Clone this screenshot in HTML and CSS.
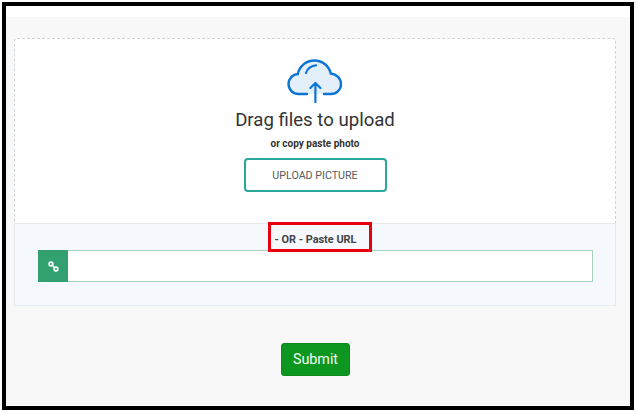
FILE: index.html
```html
<!DOCTYPE html>
<html lang="en">
<head>
<meta charset="utf-8">
<title>Upload picture</title>
<link rel="stylesheet" href="styles.css">
</head>
<body>
<div class="frame">
  <div class="page">
    <div class="card">
      <div class="drop">
        <svg class="cloud" width="56" height="44" viewBox="0 0 56 44" fill="none">
          <path d="M14 35H11.5C6 35 1.5 30.6 1.5 25C1.5 19.6 5.6 15.4 10.8 15C12.3 7.4 19 1.5 27.4 1.5C35.5 1.5 42.2 7.2 43.8 14.6C49.6 15 54 19.6 54 25.2C54 30.6 49.6 35 44 35H14Z" fill="#e3f0fb"/>
          <path d="M20 35H11.5C6 35 1.5 30.6 1.5 25C1.5 19.6 5.6 15.4 10.8 15C12.3 7.4 19 1.5 27.4 1.5C35.5 1.5 42.2 7.2 43.8 14.6C49.6 15 54 19.6 54 25.2C54 30.6 49.6 35 44 35H37" stroke="#0b74d4" stroke-width="2.4" stroke-linecap="round"/>
          <path d="M19 14C20 9.8 24.6 6.6 29 6.4" stroke="#0b74d4" stroke-width="2.2" stroke-linecap="round"/>
          <path d="M28.4 43V24M23.4 29L28.4 24L33.4 29" stroke="#0b74d4" stroke-width="2.2" stroke-linecap="round" stroke-linejoin="round"/>
        </svg>
        <h1 class="title">Drag files to upload</h1>
        <p class="hint">or copy paste photo</p>
        <button class="upload" type="button">UPLOAD PICTURE</button>
      </div>
      <div class="url-panel">
        <div class="or">- OR - Paste URL</div>
        <div class="url-group">
          <span class="addon">
            <svg width="11" height="11" viewBox="0 0 11 11" fill="none" stroke="#fff" stroke-width="1.6">
              <circle cx="3" cy="3" r="1.9"/>
              <circle cx="8" cy="8" r="1.9"/>
              <path d="M4.5 4.5L6.5 6.5"/>
            </svg>
          </span>
          <input class="url-input" type="text">
        </div>
      </div>
    </div>
    <div class="actions">
      <button class="submit" type="button">Submit</button>
    </div>
  </div>
  <div class="highlight"></div>
</div>
</body>
</html>
```

FILE: styles.css
```css
* { box-sizing: border-box; }
html, body { margin: 0; padding: 0; background: #fff; }
body { width: 636px; height: 412px; overflow: hidden; font-family: Roboto, sans-serif; }
.frame {
  position: relative;
  width: 632px;
  height: 408px;
  margin: 2px 0 0 2px;
  border: 4px solid #000;
  background: #fff;
}
.page {
  margin-top: 11px;
  height: 388px;
  background: #f8f8f8;
  padding: 21px 14px 0 8px;
}
.card { width: 602px; }
.drop {
  height: 185px;
  background: #fff;
  border: 1px dashed #ccd4dc;
  border-bottom: 0;
  border-radius: 3px 3px 0 0;
  display: flex;
  flex-direction: column;
  align-items: center;
  padding-top: 20px;
}
.cloud { display: block; }
.title {
  margin: 6px 0 0;
  font-size: 18.6px;
  line-height: 22px;
  font-weight: 400;
  color: #333;
}
.hint {
  margin: 6px 0 0;
  font-size: 10px;
  line-height: 14px;
  font-weight: 700;
  color: #333;
}
.upload {
  width: 143px;
  height: 34px;
  margin-top: 7px;
  background: #fff;
  border: 2px solid #2aa79b;
  border-radius: 4px;
  color: #5a5a5a;
  font: 400 10.7px Roboto, sans-serif;
}
.url-panel {
  height: 83px;
  background: #f5f8fc;
  border: 1px solid #e6e9ee;
  padding: 9px 22px 0 23px;
}
.or {
  text-align: center;
  font-size: 10.9px;
  line-height: 14px;
  font-weight: 700;
  color: #444;
}
.url-group { display: flex; height: 32px; margin-top: 3px; }
.addon {
  width: 30px;
  background: #33a06f;
  display: flex;
  align-items: center;
  justify-content: center;
}
.url-input {
  flex: 1;
  min-width: 0;
  background: #fff;
  border: 1px solid #a4d0bc;
  border-left: 0;
  outline: 0;
}
.actions { display: flex; justify-content: center; padding: 37px 0 0 1px; }
.submit {
  width: 69px;
  height: 33px;
  padding: 0 0 2px;
  background: #0e9720;
  border: 1px solid #0c8a1c;
  border-radius: 3px;
  color: #f2fff2;
  font: 400 14.3px Roboto, sans-serif;
}
.highlight {
  position: absolute;
  left: 262px;
  top: 216px;
  width: 104px;
  height: 30px;
  border: 3px solid #e60012;
}
```
